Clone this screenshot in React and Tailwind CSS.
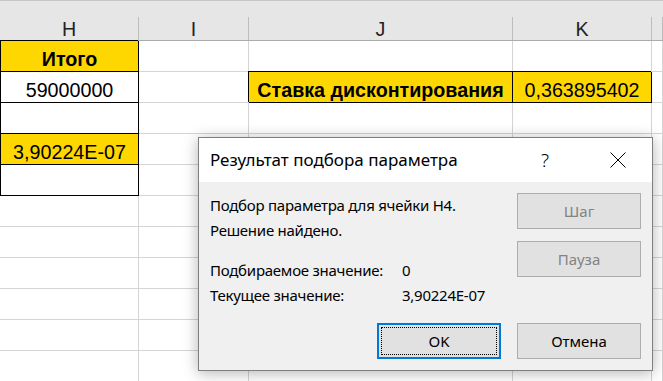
const COLS = [
  { key: 'H', w: 'w-[139px]' },
  { key: 'I', w: 'w-[110px]' },
  { key: 'J', w: 'w-[264px]' },
  { key: 'K', w: 'w-[139px]' },
  { key: 'L', w: 'flex-1' },
];

// cells keyed by row index -> column
const CELLS = {
  0: { H: { text: 'Итого', bold: true, fill: true, box: true } },
  1: {
    H: { text: '59000000', box: true },
    J: { text: 'Ставка дисконтирования', bold: true, fill: true, box: true },
    K: { text: '0,363895402', fill: true, box: true },
  },
  2: { H: { box: true } },
  3: { H: { text: '3,90224E-07', fill: true, box: true } },
  4: { H: { box: true } },
};

function Cell({ col, cell }) {
  const boxed = cell?.box;
  return (
    <div
      className={`${col.w} h-[31px] shrink-0 flex items-end justify-center pb-[1px] border-r border-b text-[19.7px] leading-[22px] text-black whitespace-nowrap overflow-hidden ${
        boxed ? 'border-black shadow-[-1px_-1px_0_0_#000]' : 'border-[#d4d4d4]'
      } ${boxed && col.key === 'H' ? 'border-l' : ''} ${cell?.fill ? 'bg-[#ffd700]' : 'bg-white'} ${
        cell?.bold ? 'font-bold' : ''
      }`}
    >
      {cell?.text}
    </div>
  );
}

function DialogButton({ children, disabled, focused }) {
  return (
    <button
      type="button"
      className={`relative w-[124px] h-[36px] bg-[#e1e1e1] text-[15px] ${
        focused ? 'border-2 border-[#0078d7]' : 'border border-[#adadad]'
      } ${disabled ? 'text-[#838383]' : 'text-black'}`}
    >
      {focused ? <span className="absolute inset-[2px] border border-dotted border-black" /> : null}
      {children}
    </button>
  );
}

function CloseGlyph() {
  return (
    <svg width="16" height="16" viewBox="0 0 16 16" className="shrink-0">
      <path d="M0.5 0.5 L15.5 15.5 M15.5 0.5 L0.5 15.5" stroke="#000" strokeWidth="1" fill="none" />
    </svg>
  );
}

function GoalSeekDialog() {
  return (
    <div className="absolute left-[198px] top-[137px] w-[455px] h-[234px] border border-[#7f7f7f] bg-[#f0f0f0] shadow-[0_2px_14px_rgba(0,0,0,0.3)] font-['Segoe_UI','Noto_Sans',sans-serif] text-black">
      <div className="h-[44px] bg-white flex items-center pl-[11px] pr-[26px]">
        <span className="text-[17px] leading-[44px] flex-1">Результат подбора параметра</span>
        <span className="text-[19px] leading-[44px] font-light mr-[61px]">?</span>
        <CloseGlyph />
      </div>

      <div className="px-[11px] pt-[11px] pb-[11px] flex flex-col">
        <div className="flex justify-between h-[115px]">
          <div className="text-[15px] leading-[25px] tracking-[-0.25px]">
            <div>Подбор параметра для ячейки H4.</div>
            <div>Решение найдено.</div>
            <div className="grid grid-cols-[192px_auto] mt-[15px]">
              <span>Подбираемое значение:</span>
              <span>0</span>
              <span>Текущее значение:</span>
              <span>3,90224E-07</span>
            </div>
          </div>
          <div className="flex flex-col gap-[12px]">
            <DialogButton disabled>Шаг</DialogButton>
            <DialogButton disabled>Пауза</DialogButton>
          </div>
        </div>
        <div className="flex justify-end gap-[16px] mt-[15px]">
          <DialogButton focused>OK</DialogButton>
          <DialogButton>Отмена</DialogButton>
        </div>
      </div>
    </div>
  );
}

export default function App() {
  const rows = [...Array(11)].map((_, i) => i);

  return (
    <div className="relative w-[663px] h-[381px] overflow-hidden bg-white font-['Liberation_Sans',Arial,sans-serif]">
      <div className="h-[41px] flex items-end bg-[#e6e6e6] border-t border-t-[#c6c6c6] border-b border-b-[#ababab]">
        {COLS.map((col) => (
          <div
            key={col.key}
            className={`${col.w} h-[23px] shrink-0 border-r border-[#bdbdbd] text-center text-[19.7px] leading-[21px] pt-[2px] text-[#222]`}
          >
            {col.key === 'L' ? '' : col.key}
          </div>
        ))}
      </div>

      {rows.map((r) => (
        <div key={r} className="flex">
          {COLS.map((col) => (
            <Cell key={col.key} col={col} cell={CELLS[r]?.[col.key]} />
          ))}
        </div>
      ))}

      <GoalSeekDialog />
    </div>
  );
}
